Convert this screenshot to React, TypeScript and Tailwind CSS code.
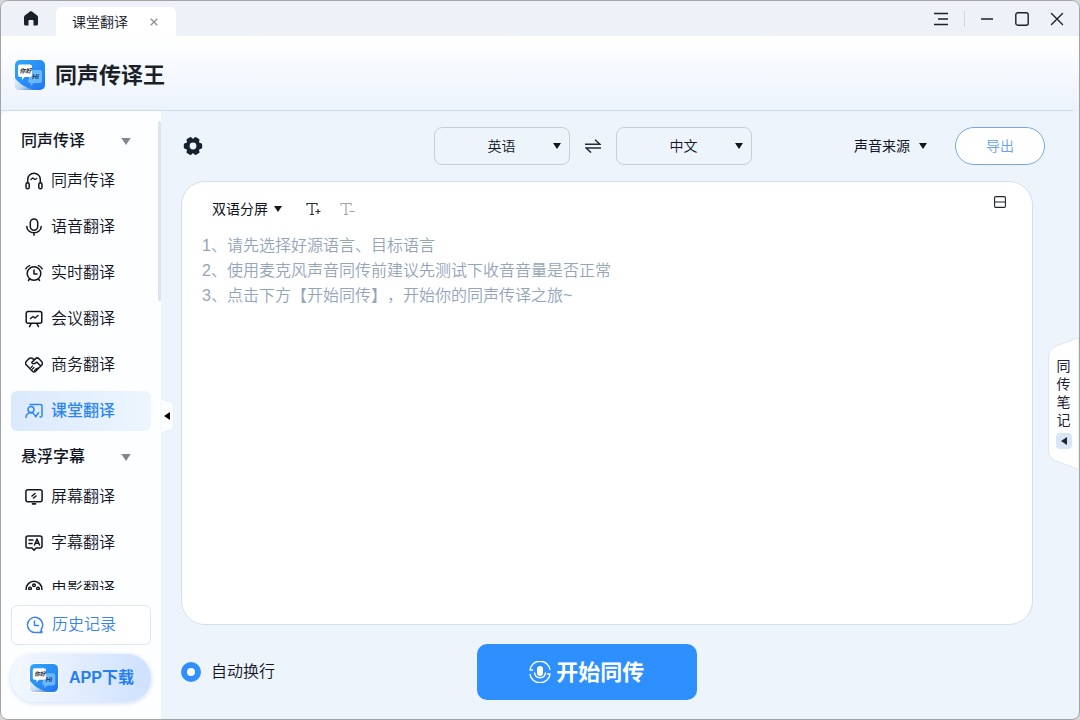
import { useState, type ReactNode } from "react";

function Icon({ children, className = "size-[18px]" }: { children: ReactNode; className?: string }) {
  return (
    <svg
      viewBox="0 0 18 18"
      className={`${className} shrink-0`}
      fill="none"
      stroke="currentColor"
      strokeWidth="1.5"
      strokeLinecap="round"
      strokeLinejoin="round"
      aria-hidden="true"
    >
      {children}
    </svg>
  );
}

function Logo({ className, id }: { className: string; id: string }) {
  return (
    <svg viewBox="0 0 30 30" className={`${className} shrink-0`} aria-hidden="true">
      <defs>
        <linearGradient id={id} x1="0" y1="0" x2="1" y2="1">
          <stop offset="0" stopColor="#2fa8fb" />
          <stop offset="1" stopColor="#2474f0" />
        </linearGradient>
        <linearGradient id={`${id}-fold`} x1="0" y1="0" x2="1" y2="1">
          <stop offset="0" stopColor="#e6f1fb" />
          <stop offset="0.55" stopColor="#c3daf0" />
          <stop offset="1" stopColor="#4a86c8" />
        </linearGradient>
      </defs>
      <rect width="30" height="30" rx="5" fill={`url(#${id})`} />
      <path d="M0 18c4 5.500 10 9.500 19 12H4a4 4 0 0 1-4-4z" fill={`url(#${id}-fold)`} />
      <path d="M16 10h9a2 2 0 0 1 2 2v9a2 2 0 0 1-2 2h-6l-4 3 1-3h-1a2 2 0 0 1-2-2z" fill="#68b8fb" />
      <path d="M5 4.500h10a2 2 0 0 1 2 2V15a2 2 0 0 1-2 2H9.500L7 20v-3H5a2 2 0 0 1-2-2V6.500a2 2 0 0 1 2-2z" fill="#fff" />
      <text x="4.500" y="13" fontSize="6" fontWeight="700" fontStyle="italic" fill="#1d2533">你好</text>
      <text x="17" y="19" fontSize="7" fontWeight="700" fontStyle="italic" fill="#173c70">Hi</text>
    </svg>
  );
}

function Caret({ className = "h-[6px] w-2" }: { className?: string }) {
  return (
    <svg viewBox="0 0 8 6" className={`${className} pointer-events-none shrink-0`} fill="currentColor" aria-hidden="true">
      <path d="M0 0h8L4 6z" />
    </svg>
  );
}

const icons = {
  headset: (
    <Icon>
      <path d="M2.700 10.800V7.500a6.300 6.300 0 0 1 12.600 0v3.300" />
      <path d="M6 7.500l1.800-1.500L10 7.500 11.800 6.500" strokeWidth="1.300" />
      <rect x="1" y="10.800" width="3.200" height="6" rx="1.600" />
      <rect x="13.800" y="10.800" width="3.200" height="6" rx="1.600" />
    </Icon>
  ),
  mic: (
    <Icon>
      <rect x="5.300" y="1" width="7.400" height="11.200" rx="3.700" />
      <path d="M1.800 8.500a7.200 6.300 0 0 0 14.400 0M9 15v2.200" />
    </Icon>
  ),
  alarm: (
    <Icon>
      <circle cx="9" cy="9.500" r="6.800" />
      <path d="M9 6v4h3M.8 4.800a7 7 0 0 1 3.700-3.200M17.200 4.800a7 7 0 0 0-3.700-3.200M4.500 15l-1 1.500M13.500 15l1 1.500" />
    </Icon>
  ),
  board: (
    <Icon>
      <rect x="1.200" y="1.500" width="15.600" height="11.800" rx="2" />
      <path d="M5.500 8.500L8 6.500l2 1.500 3-2.500M6 13.800l-1.500 2.800M12 13.800l1.500 2.800" />
    </Icon>
  ),
  shake: (
    <Icon>
      <path d="M9 3.500L6.800 2.200a2.500 2.500 0 0 0-2.800.4L1.200 5.500a2.300 2.300 0 0 0 0 3.300l6.500 6.700a1.900 1.900 0 0 0 2.700 0l6.400-6.500a2.300 2.300 0 0 0 0-3.300L14 2.700a2.500 2.500 0 0 0-3.400-.1L6.700 6.500c.8 1.700 2.600 1.700 4 .3l1-.8 4 4" />
      <path d="M7.500 13l1.500-1.500M9.500 14.500l1.800-1.800M6 11.500L7.500 10M11.500 13.500l1.500-1.500" strokeWidth="1.200" />
    </Icon>
  ),
  lesson: (
    <Icon>
      <path d="M5 2.500h10.500a1.500 1.500 0 0 1 1.500 1.500v9.500a1.500 1.500 0 0 1-1.500 1.500H15" />
      <circle cx="6" cy="7.500" r="3" />
      <path d="M1 15.500c0-2.800 2-4.800 5-4.800 1.800 0 3 .8 3.700 2.300l1 1.800 2.800-4" />
    </Icon>
  ),
  screen: (
    <Icon>
      <rect x=".9" y="1.800" width="16.200" height="12" rx="2" />
      <path d="M7 8l3-2.500M8.500 10L11 8M7.500 15.900h3" strokeWidth="1.600" />
    </Icon>
  ),
  caption: (
    <Icon>
      <path d="M3 2h12a2 2 0 0 1 2 2v8a2 2 0 0 1-2 2h-4L9 16.200 7 14H3a2 2 0 0 1-2-2V4a2 2 0 0 1 2-2z" />
      <path d="M4 6h4M4 9.500h3M9.500 11L12 5l2.500 6M10.500 9.300h3" />
    </Icon>
  ),
  film: (
    <Icon>
      <circle cx="9" cy="9.200" r="7.900" />
      <circle cx="9" cy="5.300" r="1.300" />
      <circle cx="5" cy="8.500" r="1.300" />
      <circle cx="13" cy="8.500" r="1.300" />
      <circle cx="6.500" cy="13" r="1.300" />
      <circle cx="11.500" cy="13" r="1.300" />
    </Icon>
  ),
};

const groups = [
  {
    title: "同声传译",
    items: [
      { label: "同声传译", icon: icons.headset },
      { label: "语音翻译", icon: icons.mic },
      { label: "实时翻译", icon: icons.alarm },
      { label: "会议翻译", icon: icons.board },
      { label: "商务翻译", icon: icons.shake },
      { label: "课堂翻译", icon: icons.lesson },
    ],
  },
  {
    title: "悬浮字幕",
    items: [
      { label: "屏幕翻译", icon: icons.screen },
      { label: "字幕翻译", icon: icons.caption },
      { label: "电影翻译", icon: icons.film },
    ],
  },
];

function TitleBar() {
  return (
    <div className="flex h-[35px] shrink-0 items-end bg-[#eef1f7]">
      <button aria-label="主页" className="flex h-full w-[55px] items-center justify-center pl-1 text-[#1c2029]">
        <svg viewBox="0 0 14 15" className="h-[15px] w-[14px]" fill="currentColor" aria-hidden="true">
          <path d="M6 .4a1.700 1.700 0 0 1 2 0l5.200 4.200c.5.400.8.900.8 1.500V13a1.500 1.500 0 0 1-1.500 1.500H9.500V10a1 1 0 0 0-1-1h-3a1 1 0 0 0-1 1v4.500h-3A1.500 1.500 0 0 1 0 13V6.100c0-.6.3-1.100.8-1.500z" />
        </svg>
      </button>
      <div className="flex h-[29px] w-[120px] items-center justify-between rounded-t-md bg-white pr-[18px] pl-4 text-sm font-[350]">
        <span>课堂翻译</span>
        <button aria-label="关闭标签" className="text-[#8b8e95]">
          <svg viewBox="0 0 8 8" className="size-2" stroke="currentColor" strokeWidth="1.300" aria-hidden="true">
            <path d="M.7.700l6.600 6.600M7.300.700L.7 7.300" />
          </svg>
        </button>
      </div>
      <div className="ml-auto flex h-full items-center pr-[15px] text-[#1c2029]">
        <button aria-label="菜单">
          <svg viewBox="0 0 16 14" className="h-[14px] w-4" stroke="currentColor" strokeWidth="1.300" aria-hidden="true">
            <path d="M1 1.500h14M5 7h10M1 12.500h14" />
          </svg>
        </button>
        <div className="mx-[15px] h-4 w-px bg-[#d3d7df]" />
        <button aria-label="最小化">
          <svg viewBox="0 0 14 14" className="size-[14px]" stroke="currentColor" strokeWidth="1.300" aria-hidden="true">
            <path d="M1 7h12" />
          </svg>
        </button>
        <button aria-label="最大化" className="ml-[21px]">
          <svg viewBox="0 0 14 14" className="size-[14px]" fill="none" stroke="currentColor" strokeWidth="1.400" aria-hidden="true">
            <rect x=".8" y=".8" width="12.400" height="12.400" rx="2" />
          </svg>
        </button>
        <button aria-label="关闭" className="ml-[21px]">
          <svg viewBox="0 0 14 14" className="size-[14px]" stroke="currentColor" strokeWidth="1.400" strokeLinecap="round" aria-hidden="true">
            <path d="M1.500 1.500l11 11M12.500 1.500l-11 11" />
          </svg>
        </button>
      </div>
    </div>
  );
}

function Sidebar() {
  const [active, setActive] = useState("课堂翻译");
  return (
    <aside className="relative flex w-40 shrink-0 flex-col rounded-tl-lg bg-[#fdfeff] pt-[10px]">
      <div className="relative min-h-0 flex-1 overflow-hidden">
        <nav className="h-full overflow-hidden px-[10px]">
          {groups.map((group) => (
            <section key={group.title}>
              <button className="flex h-10 w-full items-center justify-between pr-5 pl-[10px] text-base font-medium">
                {group.title}
                <Caret className="h-[7px] w-[10px] text-[#81858f]" />
              </button>
              {group.items.map((item) => (
                <button
                  key={group.title + item.label}
                  onClick={() => setActive(item.label)}
                  className={`mb-[6px] flex h-10 w-full items-center gap-2 rounded-md pl-[14px] text-base ${
                    item.label === active
                      ? "bg-linear-to-r from-[#dbe9fd] to-[#edf6fe] font-medium text-[#2b86f5]"
                      : "font-[350] text-[#10151f]"
                  }`}
                >
                  {item.icon}
                  {item.label}
                </button>
              ))}
            </section>
          ))}
        </nav>
        <div className="absolute top-0 right-0 h-[180px] w-[3px] rounded-full bg-[#dde4ef]" />
      </div>
      <div className="flex flex-col px-[10px] pt-[15px] pb-[17px]">
        <button className="flex h-10 items-center gap-2 rounded-md border border-[#dfe6f2] bg-white pl-[14px] text-base font-[350] text-[#3884ec]">
          <Icon>
            <path d="M14.500 15.500v1H9a7.600 7.600 0 1 1 7.300-5.300c-.4 1.200-1.300 1.500-1.100 2.500.1.900 1 1.200.6 2.800h-1.300" />
            <path d="M8.500 5v4.500h4" />
          </Icon>
          历史记录
        </button>
        <button className="mt-[9px] flex h-12 items-center gap-[10px] rounded-full bg-linear-to-r from-[#f3f8ff] to-[#cfe1ff] pl-[18px] text-base font-bold text-[#2480ee] shadow-[0_1px_5px_#cbdcf5]">
          <span className="rounded-md bg-white p-px">
            <Logo className="size-7" id="logo-download" />
          </span>
          APP下载
        </button>
      </div>
      <button
        aria-label="收起侧栏"
        className="absolute top-[288px] left-40 flex h-[34px] w-[13px] items-center justify-center text-black"
      >
        <svg viewBox="0 0 13 34" className="h-[34px] w-[13px]" aria-hidden="true">
          <path d="M0 0l9 3c2.500 1 3.500 2 3.500 4v20c0 2-1 3-3.500 4l-9 3z" fill="#fdfeff" stroke="#e1e8f2" strokeWidth=".6" />
          <path d="M9 13v8L3 17z" fill="currentColor" />
        </svg>
      </button>
    </aside>
  );
}

function LanguageSelect({ label, value }: { label: string; value: string }) {
  return (
    <div className="relative flex items-center">
      <select
        aria-label={label}
        defaultValue={value}
        className="h-[38px] w-[136px] appearance-none rounded-lg border border-[#c5cedb] bg-transparent text-center text-sm font-[350] [text-align-last:center]"
      >
        <option>英语</option>
        <option>中文</option>
      </select>
      <Caret className="absolute right-[9px] h-[6px] w-2" />
    </div>
  );
}

const gearLobes = [0, 60, 120, 180, 240, 300];

function Toolbar() {
  return (
    <div className="flex h-[38px] shrink-0 items-center">
      <button aria-label="设置" className="ml-[2px] text-[#17202e]">
        <svg viewBox="0 0 20 20" className="size-5" aria-hidden="true">
          <circle cx="10" cy="10" r="7.400" fill="currentColor" />
          {gearLobes.map((angle) => (
            <rect
              key={angle}
              x="14"
              y="7"
              width="5.200"
              height="6"
              rx="1.800"
              fill="currentColor"
              transform={`rotate(${angle} 10 10)`}
            />
          ))}
          <circle cx="10" cy="10" r="3.400" fill="#eef4fc" />
        </svg>
      </button>
      <div className="grow-[9]" />
      <LanguageSelect label="源语言" value="英语" />
      <button aria-label="交换语言" className="mx-[15px]">
        <svg viewBox="0 0 16 14" className="h-[14px] w-4" fill="none" stroke="#252b36" strokeWidth="1.500" aria-hidden="true">
          <path d="M0 5.300h15L10 .700M16 9H1l5 4.600" />
        </svg>
      </button>
      <LanguageSelect label="目标语言" value="中文" />
      <div className="grow-[4]" />
      <div className="relative flex items-center">
        <select aria-label="声音来源" className="appearance-none bg-transparent pr-[17px] text-sm">
          <option>声音来源</option>
        </select>
        <Caret className="absolute right-0 h-[6px] w-2" />
      </div>
      <button className="ml-7 h-[38px] w-[90px] rounded-full border border-[#72a9ea] bg-white text-sm font-[350] text-[#66a3ee]">
        导出
      </button>
    </div>
  );
}

function Transcript() {
  return (
    <section className="mr-3 flex min-h-0 flex-1 flex-col rounded-3xl border border-[#d3dfec] bg-white px-5 pt-[15px]">
      <div className="flex h-6 items-center pr-[6px] pl-[10px]">
        <div className="relative flex items-center">
          <select aria-label="显示方式" className="appearance-none bg-transparent pr-[14px] text-sm">
            <option>双语分屏</option>
          </select>
          <Caret className="absolute right-0 h-[6px] w-2" />
        </div>
        <button aria-label="增大字号" className="ml-6 text-[#2c3038]">
          <svg viewBox="0 0 16 14" className="h-[14px] w-4" fill="none" stroke="currentColor" strokeWidth="1.200" aria-hidden="true">
            <path d="M1 3.500V1.500h10v2M6 1.500v11M4 12.500h4M9.500 9.500h5M12 7v5" />
          </svg>
        </button>
        <button aria-label="减小字号" className="ml-[18px] text-[#a0a3aa]">
          <svg viewBox="0 0 16 14" className="h-[14px] w-4" fill="none" stroke="currentColor" strokeWidth="1.200" aria-hidden="true">
            <path d="M1 3.500V1.500h10v2M6 1.500v11M4 12.500h4M9.500 9.500h5" />
          </svg>
        </button>
        <button aria-label="切换布局" className="mb-[14px] ml-auto">
          <svg viewBox="0 0 12 12" className="size-3" fill="none" stroke="#20242c" strokeWidth="1.100" aria-hidden="true">
            <rect x=".6" y=".6" width="10.800" height="10.800" rx="1.200" />
            <path d="M.6 6h10.800" />
          </svg>
        </button>
      </div>
      <div className="mt-3 text-base leading-[25px] font-[350] text-[#94a5ba] [text-spacing-trim:space-all]">
        <p>1、请先选择好源语言、目标语言</p>
        <p>2、使用麦克风声音同传前建议先测试下收音音量是否正常</p>
        <p>3、点击下方【开始同传】，开始你的同声传译之旅~</p>
      </div>
    </section>
  );
}

function Footer() {
  return (
    <div className="mr-3 flex h-14 shrink-0 items-center">
      <label className="flex items-center gap-[10px] text-base font-[350]">
        <input
          type="radio"
          name="wrap"
          defaultChecked
          className="size-5 appearance-none rounded-full border-[6px] border-[#2f8fff] bg-white"
        />
        自动换行
      </label>
      <div className="grow-[3]" />
      <button className="flex h-14 w-[220px] items-center justify-center gap-[5px] rounded-[10px] bg-[#2e90ff] text-[22px] font-bold text-white">
        <svg viewBox="0 0 22 22" className="size-[22px]" fill="none" stroke="currentColor" strokeWidth="1.400" aria-hidden="true">
          <path d="M.9 9A10.200 10.200 0 0 1 21.100 9M.9 13a10.200 10.200 0 0 0 20.200 0M.5 9h3.500M18 13h3.500" />
          <rect x="8" y="5" width="6" height="10" rx="3" fill="currentColor" stroke="none" />
          <path d="M5.500 11.500c.3 3.500 2.500 5.200 5.500 5.200s5.200-1.700 5.500-5.200" />
        </svg>
        开始同传
      </button>
      <div className="grow-[5]" />
    </div>
  );
}

function NotesTab() {
  return (
    <button className="absolute top-[226px] right-0 flex h-[133px] w-[31px] flex-col items-center text-sm text-[#1d2533]">
      <svg viewBox="0 0 31 133" className="absolute inset-0 h-[133px] w-[31px]" aria-hidden="true">
        <path d="M31 .5L8 9Q.5 12 .5 20v93q0 8 7.500 11l23 8.500z" fill="#fff" stroke="#dce5f0" />
      </svg>
      <span className="relative mt-5 w-[14px] leading-[18px]">同传笔记</span>
      <span className="relative mt-1 flex h-4 w-4 items-center justify-center rounded-sm bg-[#d9e6f4]">
        <svg viewBox="0 0 6 8" className="h-2 w-[6px]" fill="currentColor" aria-hidden="true">
          <path d="M6 0v8L0 4z" />
        </svg>
      </span>
    </button>
  );
}

export default function App() {
  return (
    <div className="h-screen bg-[#d8d6d6] font-['Liberation_Sans','Noto_Sans_CJK_SC',sans-serif] text-[#10151f]">
      <div className="flex h-full flex-col overflow-hidden rounded-lg border border-[#a3a3a6] bg-[#eef4fc]">
        <TitleBar />
        <header className="shrink-0 bg-linear-to-b from-white to-[#ecf3fd] pr-[6px]">
          <div className="flex h-[75px] items-center gap-[10px] border-b border-[#cddcec] pt-1 pl-[14px]">
            <Logo className="size-[30px]" id="logo-header" />
            <h1 className="text-[22px] font-bold text-[#1b1f28]">同声传译王</h1>
          </div>
        </header>
        <div className="relative flex min-h-0 flex-1">
          <Sidebar />
          <main className="flex min-w-0 flex-1 flex-col pt-4 pr-[34px] pb-[19px] pl-5">
            <Toolbar />
            <div className="mt-4 mb-[19px] flex min-h-0 flex-1 flex-col">
              <Transcript />
            </div>
            <Footer />
          </main>
          <NotesTab />
        </div>
      </div>
    </div>
  );
}
